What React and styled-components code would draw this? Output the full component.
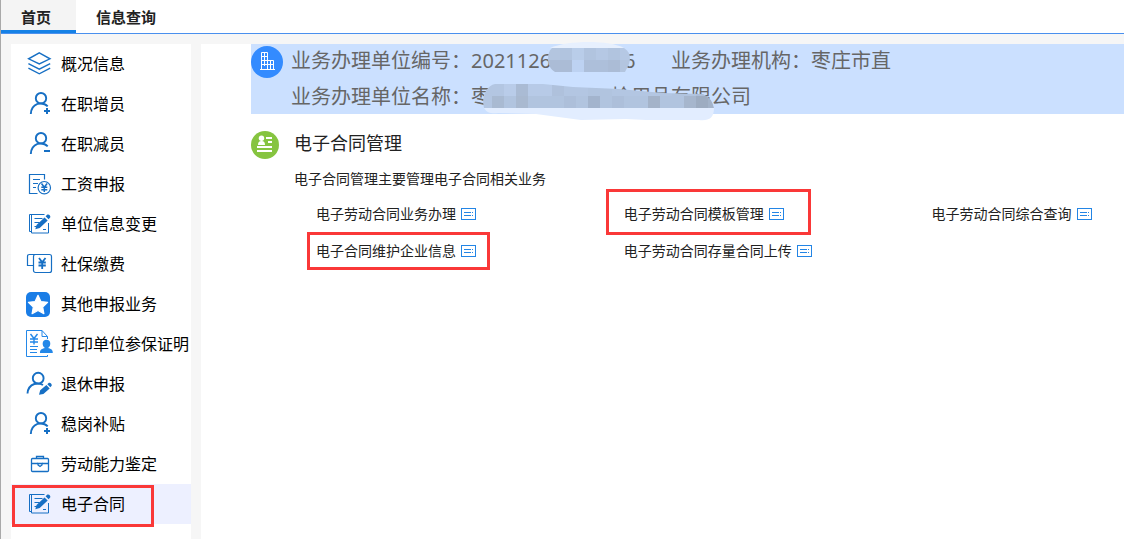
import React from "react";
import styled, { createGlobalStyle } from "styled-components";

const GlobalStyle = createGlobalStyle`
  * {
    box-sizing: border-box;
  }
  body {
    margin: 0;
    background: #f6f6f6;
    font-family: "Noto Sans", "Noto Sans CJK SC", sans-serif;
    overflow: hidden;
  }
`;

const Page = styled.div`
  display: flex;
  flex-direction: column;
  min-height: 100vh;
  border-left: 1px solid #a9a9a9;
`;

const TabBar = styled.nav`
  display: flex;
  height: 34px;
  background: #fff;
  border-bottom: 1px solid #4a90ee;
`;

const Tab = styled.button`
  padding: ${({ $active }) => ($active ? "3px 25px 0 20px" : "3px 20px 0")};
  border: 0;
  border-bottom: 3px solid
    ${({ $active }) => ($active ? "#1581e6" : "transparent")};
  background: ${({ $active }) => ($active ? "#f4f4f4" : "transparent")};
  color: #222;
  font-family: inherit;
  font-size: 15px;
  font-weight: 700;
  line-height: 20px;
  cursor: pointer;
`;

const Layout = styled.div`
  display: flex;
  flex: 1;
  gap: 10px;
  padding: 10px 0 0 10px;
`;

const Sidebar = styled.nav`
  flex: 0 0 180px;
  background: #fff;
`;

const Menu = styled.ul`
  margin: 0;
  padding: 0;
  list-style: none;
`;

const MenuLink = styled.a`
  position: relative;
  display: flex;
  align-items: center;
  gap: 8px;
  height: 40px;
  padding-left: 14px;
  background: ${({ $active }) => ($active ? "#edf0ff" : "transparent")};
  color: #000;
  font-size: 16px;
  line-height: 24px;
  white-space: nowrap;
  text-decoration: none;

  svg {
    flex: none;
    width: 28px;
    height: 28px;
  }
`;

// Red frame drawn over the item it calls out
const Frame = styled.span`
  position: absolute;
  inset: ${({ $inset }) => $inset};
  border: 3px solid #fa3838;
  pointer-events: none;
`;

const Main = styled.main`
  flex: 1;
  min-width: 0;
  padding-left: 50px;
  background: #fff;
`;

const Banner = styled.header`
  position: relative;
  display: flex;
  gap: 8px;
  background: #cbe0ff;
  color: #666;
  font-size: 20px;
  line-height: 34px;
  white-space: nowrap;
`;

const BannerIcon = styled.svg`
  flex: none;
  width: 32px;
  height: 32px;
  margin-top: 2px;
`;

const BannerRows = styled.div`
  display: flex;
  flex-direction: column;
  gap: 2px;
`;

const BannerRow = styled.div`
  display: flex;
`;

const Field = styled.span`
  display: flex;
  min-width: ${({ $wide }) => ($wide ? "380px" : "0")};
`;

const Hidden = styled.span`
  width: ${({ $width }) => $width}px;
`;

const Mask = styled.svg`
  position: absolute;
  top: -4px;
  left: 230px;
  width: 240px;
  height: 84px;
`;

const Section = styled.section`
  display: flex;
  gap: 15px;
  padding-top: 17px;
  color: #222;
`;

const SectionIcon = styled.svg`
  flex: none;
  width: 28px;
  height: 28px;
`;

const SectionBody = styled.div`
  flex: 1;
  min-width: 0;
`;

const Title = styled.h2`
  margin: 0;
  font-size: 18px;
  font-weight: 400;
  line-height: 24px;
`;

const Summary = styled.p`
  margin: 14px 0 6px;
  font-size: 14px;
  line-height: 20px;
`;

const LinkGrid = styled.div`
  display: grid;
  grid-template-columns: 8fr 8fr 5fr;
  justify-items: start;
  padding-left: 22px;
`;

const ActionLink = styled.a`
  position: relative;
  display: flex;
  align-items: center;
  gap: 5px;
  height: 37px;
  color: #222;
  font-size: 14px;
  line-height: 20px;
  white-space: nowrap;
  text-decoration: none;

  svg {
    width: 15px;
    height: 12px;
  }
`;

const Icon = ({ children, width = 1.2, color = "#166fc4" }) => (
  <svg
    viewBox="0 0 28 28"
    fill="none"
    stroke={color}
    strokeWidth={width}
    aria-hidden="true"
  >
    {children}
  </svg>
);

const LayersIcon = () => (
  <Icon width={1.4}>
    <path d="M14.3 2.8 25 8.8 14.3 14 3.6 8.8z" />
    <path d="M3.4 13.6 14.3 19.2l10.9-5.6M3.4 18.2 14.3 23.8l10.9-5.6" />
  </Icon>
);

const Person = () => (
  <>
    <circle cx="16" cy="8.2" r="5.2" />
    <path d="M5.8 24c.2-5.3 2.5-8.500 6.700-10.1M12.500 13.900c3.500-.9 7.500-.4 10.200 2.400" />
  </>
);

const PersonAddIcon = () => (
  <Icon width={1.9}>
    <Person />
    <path d="M22 18v6M19 21h6" strokeWidth="2" />
  </Icon>
);

const PersonMinusIcon = () => (
  <Icon width={1.9}>
    <Person />
    <path d="M19 21h6" strokeWidth="2" />
  </Icon>
);

const SalaryIcon = () => (
  <Icon>
    <path d="M19.5 9.5v-5h-15v19h8M8 9.500h7M8 13.500h5M8 17.500h3" />
    <circle cx="19.3" cy="17.7" r="6.2" />
    <path
      d="m16.5 13.500 2.800 3.700 2.800-3.700M16.300 17.300h6M16.300 19.800h6M19.300 17v5"
      strokeWidth="1.5"
    />
  </Icon>
);

const EditIcon = () => (
  <Icon width={1}>
    <path d="M7 21.5H4.500v-17H7M19.500 4.500H6.500v18.500h17V13" />
    <path d="M9.500 8.500h8M9.500 12.500h5M9.500 16.500h2M18 19.500h3" />
    <path
      d="m10.300 19.300 1.200-4.200 8-7.700 3.200 3.200-8 7.500zM20.600 6.300l1.800-1.700c1.500-.7 3.600 1.200 2.800 2.800l-1.600 1.800z"
      fill="#166fc4"
      stroke="none"
    />
  </Icon>
);

const InsuranceIcon = () => (
  <Icon>
    <rect x="8.5" y="4.5" width="18" height="18" rx="2" />
    <path d="M10.500 4.500h-6q-2 0-2 2v9h6" />
    <path
      d="m14 8 3.200 4.300L20.500 8M13.500 12.500h7.300M13.500 15.500h7.300M17.200 12v7"
      strokeWidth="1.8"
    />
  </Icon>
);

const StarIcon = () => (
  <Icon>
    <rect
      x="1"
      y="2"
      width="24"
      height="25"
      rx="5"
      fill="#1a7de6"
      stroke="none"
    />
    <path
      d="m13 5.300 2.900 6.200 6.700.8-4.900 4.700 1.200 6.700-5.900-3.200-5.900 3.200 1.200-6.700-4.900-4.700 6.700-.8z"
      fill="#fff"
      stroke="#fff"
      strokeLinejoin="round"
    />
  </Icon>
);

const PrintIcon = () => (
  <Icon color="#2488e8" width={1}>
    <path d="M22.500 9V6.500l-5.500-6H1.500v26h21V25M17 .5v6h5.500" />
    <path
      d="m5.500 4 3.500 4.500L12.500 4M5 9h8M5 12h8M9 8.500v6"
      strokeWidth="1.4"
    />
    <path d="M5 16.500h8M5 19.500h7M5 22.500h7" />
    <path
      d="M21.500 9.700c4.900 0 4.700 6.300 1.600 8.300 2.200.7 4.900 1.200 4.700 5H15c-.2-3.800 2.500-4.300 4.900-5-3.100-2-3.300-8.300 1.600-8.300z"
      fill="#2488e8"
      stroke="none"
    />
  </Icon>
);

const RetireIcon = () => (
  <Icon width={1.9}>
    <circle cx="13.2" cy="8.2" r="5.4" />
    <path d="M2.500 23.500C2.800 18.500 5 15.500 9.300 14c3.200-1 6-.7 8.700 1" />
    <path
      d="m14 24.800 1.200-4.600 6.200-5.300 3.300 3.700-6.300 5.300zM22.300 14.200l1.600-1.400c1.600-.5 3.300 1.600 2.800 3l-1.400 1.500z"
      fill="#166fc4"
      stroke="none"
    />
  </Icon>
);

const BriefcaseIcon = () => (
  <Icon width={1.3}>
    <rect x="6.5" y="8.5" width="17" height="13" rx="1" />
    <path d="M11.500 8.500v-2h7v2M6.500 13.500h6.500M17 13.500h6.500" />
    <path d="M13 13.500h4v1.500l-2 1.500-2-1.500z" />
  </Icon>
);

const FormIcon = () => (
  <svg viewBox="0 0 15 12" fill="none" stroke="#2385e5" aria-hidden="true">
    <rect x=".5" y=".5" width="14" height="11" />
    <path d="M3 4.500h7M3 7.500h7M11 4.500h1M11 7.500h1" />
  </svg>
);

const menuItems = [
  { label: "概况信息", icon: LayersIcon },
  { label: "在职增员", icon: PersonAddIcon },
  { label: "在职减员", icon: PersonMinusIcon },
  { label: "工资申报", icon: SalaryIcon },
  { label: "单位信息变更", icon: EditIcon },
  { label: "社保缴费", icon: InsuranceIcon },
  { label: "其他申报业务", icon: StarIcon },
  { label: "打印单位参保证明", icon: PrintIcon },
  { label: "退休申报", icon: RetireIcon },
  { label: "稳岗补贴", icon: PersonAddIcon },
  { label: "劳动能力鉴定", icon: BriefcaseIcon },
  {
    label: "电子合同",
    icon: EditIcon,
    active: true,
    frame: "1px 37px -3px 1px",
  },
];

const actions = [
  { label: "电子劳动合同业务办理" },
  { label: "电子劳动合同模板管理", frame: "-6px -27px -3px -18px" },
  { label: "电子劳动合同综合查询" },
  { label: "电子合同维护企业信息", frame: "0 -14px -1px -9px" },
  { label: "电子劳动合同存量合同上传" },
];

// Mosaic tiles, 12px each, left to right
const numberTiles = [
  "#b3c5df #b1c4df #b9cde9 #b1c4df #b5c8e4 #b1c4df #b5c8e4",
  "#abbcd6 #abbcd6 #bdd2f2 #adbfda #adbfda #abbcd6 #b3c5df",
].map((row) => row.split(" "));

const nameTiles = [
  "#b3c6e2 #b3c6e2 #b9cce9 #aabbd4 #b7cae7 #b7cae7 #afc1dc #b3c6e2 #b3c6e2 #b1c4df #b1c4df #b3c6e2 #b3c6e2 #b3c6e2 #b3c6e2 #b3c6e2 #b1c4df #b1c4df #adbfda #b3c6e2",
  "#b3c6e2 #a9bad2 #b1c4df #a9b9d0 #b1c4df #b1c4df #b1c4df #adbfda #b1c4df #a3b4cd #b1c4df #adbfda #b1c4df #b1c4df #a4b3c9 #b1c4df #b1c4df #a6b6cd #9dacc1 #a3b3c9",
].map((row) => row.split(" "));

const Tiles = ({ rows, x, y }) =>
  rows.map((row, r) =>
    row.map((fill, c) => (
      <rect
        key={`${r}-${c}`}
        x={x + c * 12}
        y={y + r * 12}
        width="12"
        height="12"
        fill={fill}
      />
    ))
  );

const PrivacyMask = () => (
  <Mask viewBox="0 0 240 84" aria-hidden="true">
    <defs>
      <clipPath id="number-mask">
        <path d="M71 8h72c6 4 7 9 5 16l-4 8H74c-5-3-7-8-7-13 0-5 1-8 4-11z" />
      </clipPath>
      <clipPath id="name-mask">
        <path d="M14 44h48l30 3 46 2 44 4 40 1q9 4 11 14H3C0 57 5 46 14 44z" />
      </clipPath>
    </defs>
    <path d="M69 8c18-8 60-8 74 0z" fill="#e7f0fe" />
    <path
      d="M3 68c3 5 8 6 14 5l38 1 15 2 30 4 45-1 20 1h53c10 1 15-2 15-12z"
      fill="#e2edff"
    />
    <g clipPath="url(#number-mask)">
      <Tiles rows={numberTiles} x={67} y={8} />
    </g>
    <g clipPath="url(#name-mask)">
      <Tiles rows={nameTiles} x={-1} y={44} />
    </g>
  </Mask>
);

const App = () => (
  <>
    <GlobalStyle />
    <Page>
      <TabBar>
        <Tab type="button" $active>
          首页
        </Tab>
        <Tab type="button">信息查询</Tab>
      </TabBar>
      <Layout>
        <Sidebar>
          <Menu>
            {menuItems.map(({ label, icon: ItemIcon, active, frame }) => (
              <li key={label}>
                <MenuLink href="#" $active={active}>
                  <ItemIcon />
                  {label}
                  {frame && <Frame $inset={frame} />}
                </MenuLink>
              </li>
            ))}
          </Menu>
        </Sidebar>
        <Main>
          <Banner>
            <BannerIcon viewBox="0 0 32 32" aria-hidden="true">
              <circle cx="16" cy="16" r="16" fill="#338bff" />
              <path
                d="M9 23.500h15M10.500 23V6.500h6V23M16.500 14.500h6V23M13.500 7v13M10.500 10.500h6M10.500 14.500h6M10.500 18.500h12M19.500 15v8"
                fill="none"
                stroke="#fff"
              />
            </BannerIcon>
            <BannerRows>
              <BannerRow>
                <Field $wide>
                  业务办理单位编号：2021126
                  <Hidden $width={73} />6
                </Field>
                <Field>业务办理机构：枣庄市直</Field>
              </BannerRow>
              <BannerRow>
                <Field>
                  业务办理单位名称：枣
                  <Hidden $width={120} />
                  检用品有限公司
                </Field>
              </BannerRow>
            </BannerRows>
            <PrivacyMask />
          </Banner>
          <Section>
            <SectionIcon viewBox="0 0 28 28" aria-hidden="true">
              <circle cx="14" cy="14" r="14" fill="#86c440" />
              <circle cx="10.5" cy="7.300" r="2.700" fill="#fff" />
              <path d="M7 14c0-2.500 1-4 3.500-4s3.500 1.500 3.500 4z" fill="#fff" />
              <path
                d="M15 7h6M17 11h4M6 16h15M6 20h15"
                stroke="#fff"
                strokeWidth="2"
              />
            </SectionIcon>
            <SectionBody>
              <Title>电子合同管理</Title>
              <Summary>电子合同管理主要管理电子合同相关业务</Summary>
              <LinkGrid>
                {actions.map(({ label, frame }) => (
                  <ActionLink href="#" key={label}>
                    {label}
                    <FormIcon />
                    {frame && <Frame $inset={frame} />}
                  </ActionLink>
                ))}
              </LinkGrid>
            </SectionBody>
          </Section>
        </Main>
      </Layout>
    </Page>
  </>
);

export default App;
